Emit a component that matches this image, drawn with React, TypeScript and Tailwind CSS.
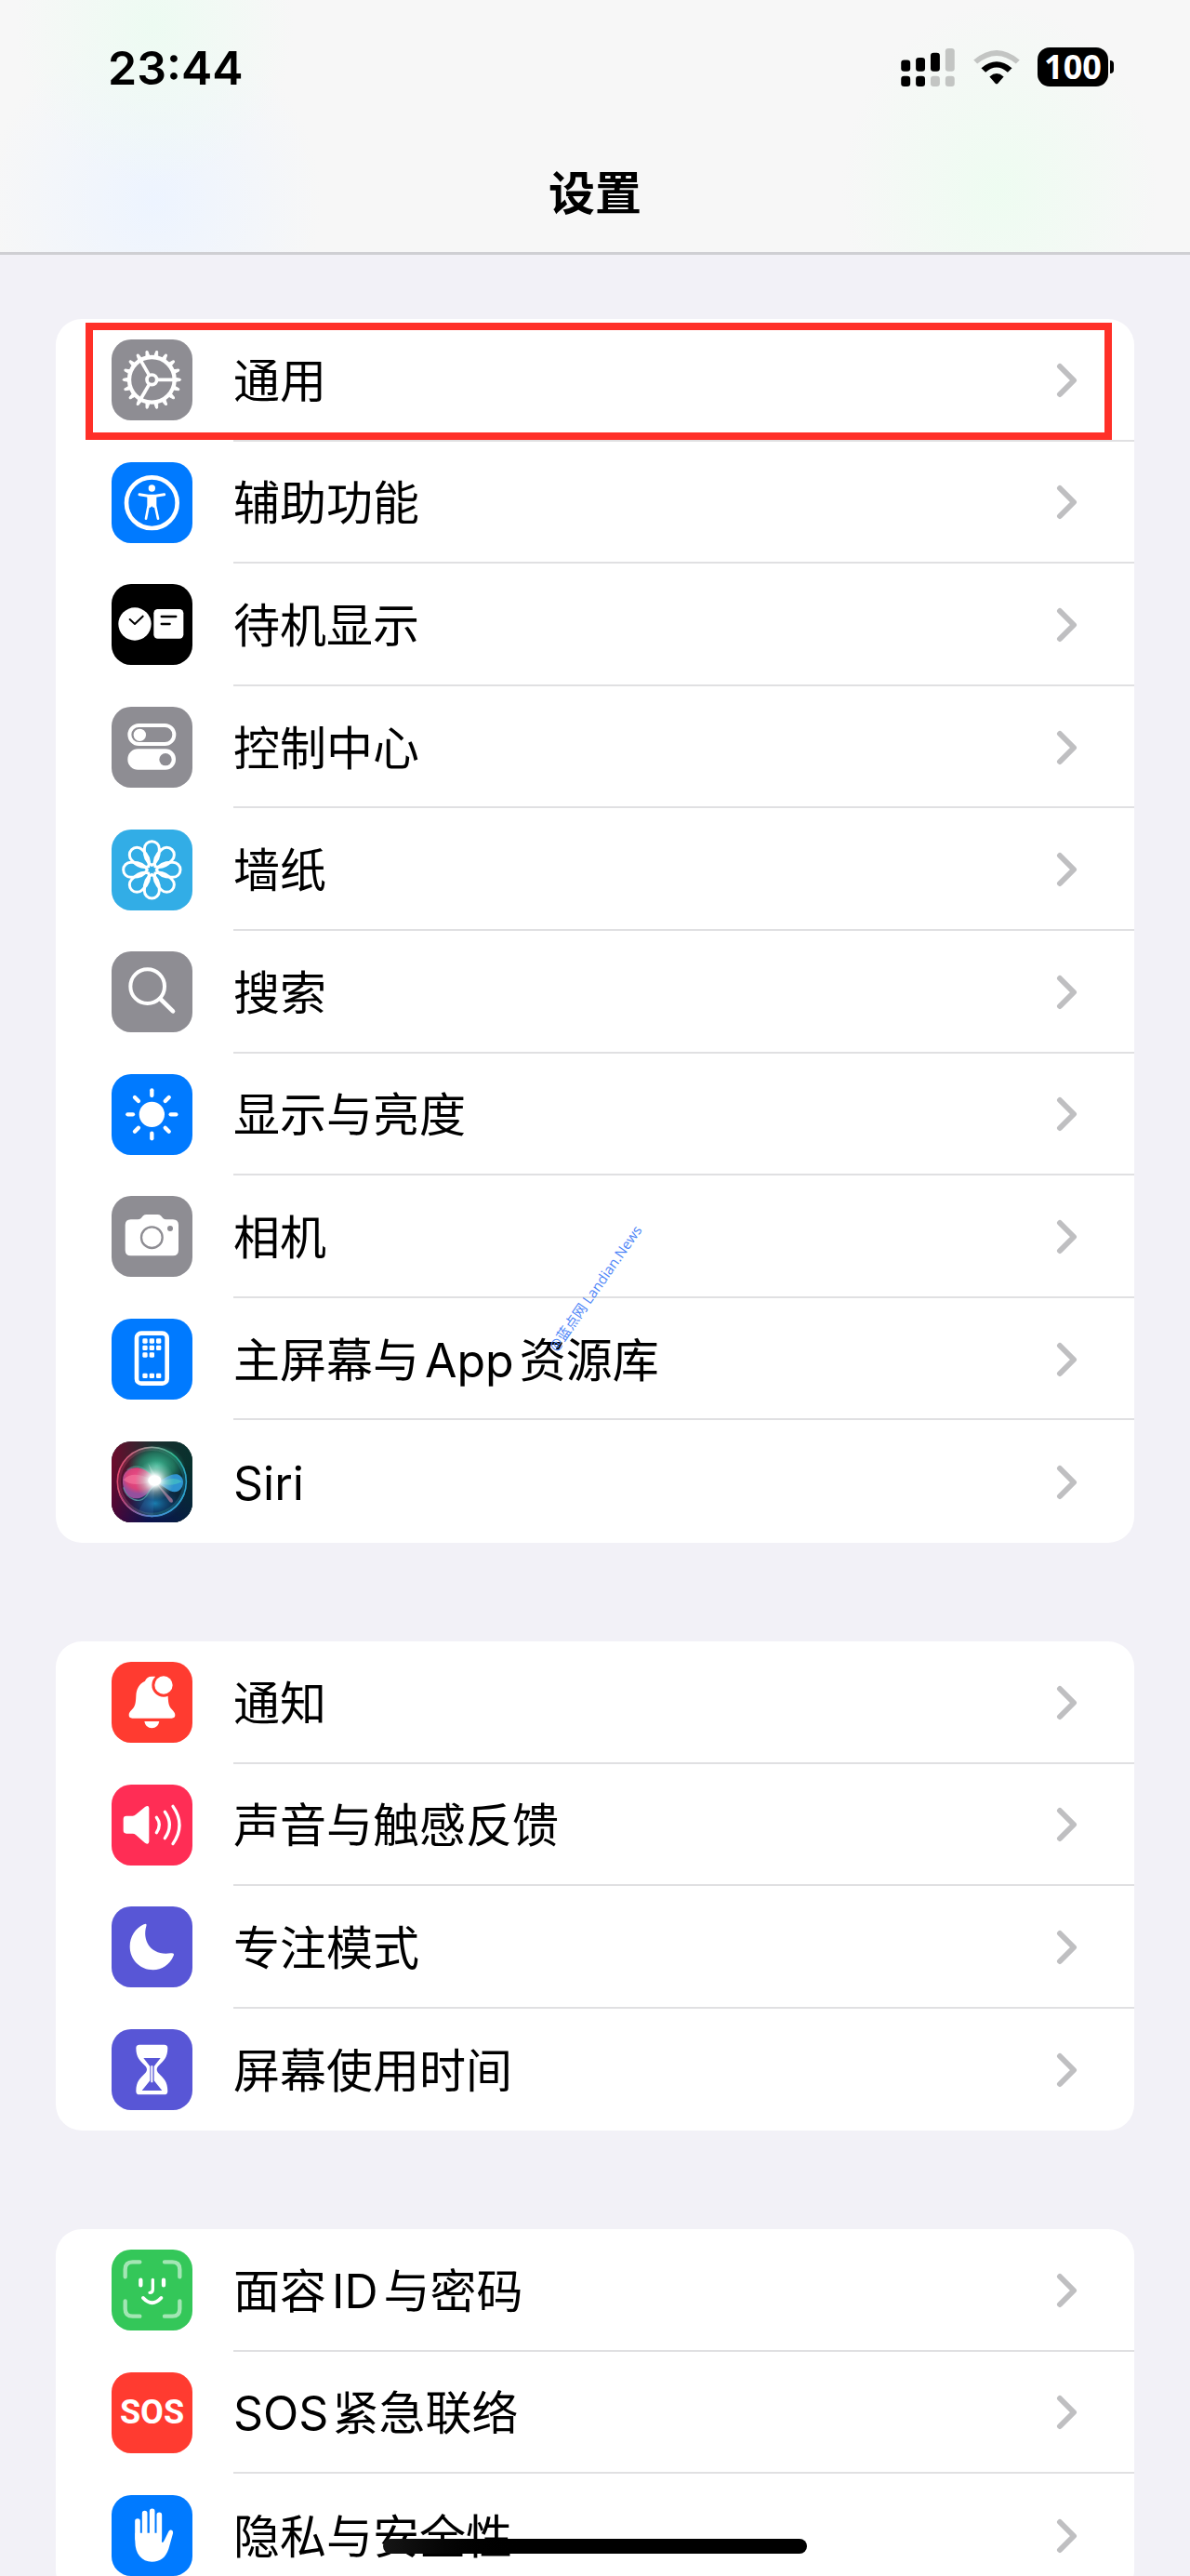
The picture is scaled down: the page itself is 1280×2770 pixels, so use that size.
import type { ReactNode } from "react";

const petalAngles = [0, 45, 90, 135, 180, 225, 270, 315];
const gearTeeth = Array.from({ length: 18 }, (_, i) => i * 20);

function GearGlyph() {
  return (
    <g stroke="#fff" fill="none">
      <circle cx="130" cy="130" r="73" strokeWidth="13" />
      <circle cx="130" cy="130" r="16" strokeWidth="11" />
      {gearTeeth.map((a) => (
        <path key={a} d="M206 124 L222 127 Q226 130 222 133 L206 136 Z" fill="#fff" strokeWidth="3" transform={`rotate(${a} 130 130)`} />
      ))}
      {[0, 120, 240].map((a) => (
        <path key={a} d="M150 130 H200" strokeWidth="11" transform={`rotate(${a} 130 130)`} />
      ))}
    </g>
  );
}

function AccessibilityGlyph() {
  return (
    <g stroke="#fff" fill="none" strokeLinecap="round" strokeLinejoin="round">
      <circle cx="130" cy="131" r="82" strokeWidth="14" />
      <circle cx="130" cy="84" r="11" fill="#fff" stroke="none" />
      <path d="M90 104 L118 109 H142 L170 104" strokeWidth="9" />
      <path d="M119 110 H141 V140 L150 182 M119 110 V140 L111 182" strokeWidth="8" />
      <path d="M119 108 H141 L142 146 H134 L130 142 L126 146 H118 Z" fill="#fff" stroke="none" />
    </g>
  );
}

function StandbyGlyph() {
  return (
    <g fill="none" strokeLinecap="round" strokeLinejoin="round">
      <circle cx="75" cy="129" r="53" fill="#fff" />
      <path d="M59 114 L75 129 L101 104" stroke="#000" strokeWidth="6" />
      <rect x="136" y="81" width="96" height="95" rx="13" fill="#fff" />
      <path d="M161 105 H208 M161 129 H188" stroke="#000" strokeWidth="7" />
    </g>
  );
}

function TogglesGlyph() {
  return (
    <g>
      <rect x="58" y="60" width="144" height="60" rx="30" fill="none" stroke="#fff" strokeWidth="12" />
      <circle cx="91" cy="91" r="20" fill="#fff" />
      <rect x="52" y="136" width="155" height="67" rx="33" fill="#fff" />
      <circle cx="174" cy="170" r="20" fill="#8e8d93" />
    </g>
  );
}

function FlowerGlyph() {
  return (
    <g fill="none" stroke="#fff" strokeWidth="9">
      {petalAngles.map((a) => (
        <path
          key={a}
          d="M130 115 C112 106 105 84 106 62 A24 24 0 0 1 154 62 C155 84 148 106 130 115 Z"
          transform={`rotate(${a} 130 130)`}
        />
      ))}
    </g>
  );
}

function SearchGlyph() {
  return (
    <g fill="none" stroke="#fff" strokeLinecap="round">
      <circle cx="116" cy="113" r="55" strokeWidth="12" />
      <path d="M157 153 L198 193" strokeWidth="14" />
    </g>
  );
}

function SunGlyph() {
  return (
    <g stroke="#fff" strokeWidth="13" strokeLinecap="round">
      <circle cx="130" cy="130" r="41" fill="#fff" stroke="none" />
      {petalAngles.map((a) => (
        <path key={a} d="M130 52 V69" transform={`rotate(${a} 130 130)`} />
      ))}
    </g>
  );
}

function CameraGlyph() {
  return (
    <g>
      <path
        fill="#fff"
        d="M62 76 H84 Q91 76 95 72 L102 64 Q106 60 113 60 H148 Q155 60 159 64 L166 72 Q170 76 177 76 H198 Q216 76 216 94 V175 Q216 193 198 193 H62 Q44 193 44 175 V94 Q44 76 62 76 Z"
      />
      <circle cx="130" cy="134" r="34" fill="none" stroke="#8e8d93" strokeWidth="7" />
      <circle cx="189" cy="105" r="9" fill="#8e8d93" />
    </g>
  );
}

function PhoneGlyph() {
  const dots = [
    [72, 108], [72, 130], [72, 152],
    [94, 108], [94, 130], [94, 152],
    [117, 108], [117, 130],
    [184, 108], [184, 130], [184, 152],
  ];
  return (
    <g>
      <rect x="81" y="47" width="98" height="162" rx="15" fill="none" stroke="#fff" strokeWidth="14" />
      {dots.map(([y, x]) => (
        <rect key={`${x}-${y}`} x={x - 8} y={y - 8} width="16" height="16" rx="4" fill="#fff" />
      ))}
    </g>
  );
}

function SiriGlyph() {
  return (
    <g>
      <defs>
        <linearGradient id="siri-top" x1="0" y1="0" x2="1" y2="0">
          <stop offset="0" stopColor="#6d0a2c" />
          <stop offset="0.5" stopColor="#1d2f30" />
          <stop offset="1" stopColor="#07312d" />
        </linearGradient>
        <linearGradient id="siri-bottom" x1="0" y1="0" x2="1" y2="0">
          <stop offset="0" stopColor="#4a0538" />
          <stop offset="0.45" stopColor="#0b1250" />
          <stop offset="1" stopColor="#06213f" />
        </linearGradient>
        <linearGradient id="siri-fade" x1="0" y1="0" x2="0" y2="1">
          <stop offset="0.3" stopColor="#fff" stopOpacity="0" />
          <stop offset="1" stopColor="#fff" />
        </linearGradient>
        <mask id="siri-mask"><rect width="261" height="261" fill="url(#siri-fade)" /></mask>
        <linearGradient id="siri-ring" x1="0" y1="0.4" x2="1" y2="0.6">
          <stop offset="0" stopColor="#e0466e" />
          <stop offset="0.4" stopColor="#8d9d98" />
          <stop offset="0.75" stopColor="#2bb78e" />
          <stop offset="1" stopColor="#2d9fd0" />
        </linearGradient>
        <linearGradient id="siri-ring-low" x1="0" y1="0" x2="1" y2="0">
          <stop offset="0" stopColor="#c23a70" />
          <stop offset="0.5" stopColor="#4a86d8" />
          <stop offset="1" stopColor="#2ba6cf" />
        </linearGradient>
        <radialGradient id="siri-green"><stop offset="0" stopColor="#3fbd98" /><stop offset="0.6" stopColor="#248468" stopOpacity="0.8" /><stop offset="1" stopColor="#1a7a61" stopOpacity="0" /></radialGradient>
        <radialGradient id="siri-deep"><stop offset="0" stopColor="#1a7fb0" /><stop offset="1" stopColor="#0c3b68" stopOpacity="0" /></radialGradient>
        <radialGradient id="siri-pink" cx="0.45" cy="0.35"><stop offset="0" stopColor="#f4508a" /><stop offset="0.7" stopColor="#d8437a" /><stop offset="1" stopColor="#94509e" /></radialGradient>
        <radialGradient id="siri-glow">
          <stop offset="0" stopColor="#fff" />
          <stop offset="0.3" stopColor="#f4fffd" stopOpacity="0.9" />
          <stop offset="0.6" stopColor="#c4e4de" stopOpacity="0.45" />
          <stop offset="1" stopColor="#7fc0b0" stopOpacity="0" />
        </radialGradient>
      </defs>
      <rect width="261" height="261" fill="url(#siri-top)" />
      <rect width="261" height="261" fill="url(#siri-bottom)" mask="url(#siri-mask)" />
      <ellipse cx="146" cy="80" rx="92" ry="70" fill="url(#siri-green)" />
      <ellipse cx="140" cy="200" rx="86" ry="56" fill="url(#siri-deep)" />
      <path d="M140 130 L88 222 Q110 236 134 238 Z" fill="#3b6fb5" opacity="0.25" />
      <path d="M36 122 C38 90 72 76 104 90 C126 100 138 120 160 132 C124 144 120 180 84 184 C52 186 34 156 36 122 Z" fill="url(#siri-pink)" />
      <path d="M38 124 C66 92 110 112 146 132 C102 134 66 148 38 124 Z" fill="#f77fa4" opacity="0.55" />
      <path d="M38 148 C50 190 92 202 112 176 C122 160 130 142 150 134" fill="none" stroke="#5fb0b6" strokeWidth="4" opacity="0.7" />
      <path d="M50 92 C80 68 112 84 146 128" fill="none" stroke="#5fb0a6" strokeWidth="4" opacity="0.5" />
      <path d="M146 132 C174 118 192 102 212 106 C236 112 238 146 216 160 C192 172 172 146 146 132 Z" fill="#2e93d0" />
      <path d="M150 132 C178 124 202 110 228 130 C206 140 182 146 150 132 Z" fill="#45c4c2" opacity="0.65" />
      <path d="M140 130 L188 196 Q202 200 196 186 Z" fill="#b07c9c" opacity="0.75" />
      <path d="M136 128 L118 70 L150 122 Z" fill="#bfe0d6" opacity="0.4" />
      <circle cx="139" cy="126" r="64" fill="url(#siri-glow)" />
      <ellipse cx="139" cy="126" rx="21" ry="17" fill="#fff" />
      <circle cx="130" cy="130" r="111" fill="none" stroke="url(#siri-ring)" strokeWidth="5" />
      <path d="M26 169 A111 111 0 0 0 234 169" fill="none" stroke="url(#siri-ring-low)" strokeWidth="5" />
      <circle cx="130" cy="130" r="104" fill="none" stroke="url(#siri-ring)" strokeWidth="8" opacity="0.25" />
    </g>
  );
}

function BellGlyph() {
  return (
    <g>
      <path
        fill="#fff"
        d="M130 47 C118 47 111 53 108 62 C88 71 80 88 79 110 C78 134 76 143 66 154 C58 162 56 166 56 172 Q56 182 67 182 H194 Q205 182 205 172 C205 166 202 162 195 154 C185 143 183 134 182 110 L170 60 L140 47 Z"
      />
      <path fill="#fff" d="M106 192 H154 Q150 214 130 214 Q110 214 106 192 Z" />
      <circle cx="168" cy="75" r="38" fill="#ff3b30" />
      <circle cx="168" cy="75" r="29" fill="#fff" />
    </g>
  );
}

function SpeakerGlyph() {
  return (
    <g>
      <path fill="#fff" d="M48 101 H68 Q74 101 78 97 L108 72 Q120 64 121 76 V184 Q120 196 108 188 L78 162 Q74 158 68 158 H48 Q38 158 38 148 V111 Q38 101 48 101 Z" />
      <path
        d="M145 106 Q163 130 145 155 M172 88 Q202 130 172 173 M198 70 Q240 130 198 191"
        fill="none"
        stroke="#fff"
        strokeWidth="10"
        strokeLinecap="round"
      />
    </g>
  );
}

function MoonGlyph() {
  return (
    <path
      fill="#fff"
      d="M104 58 C112 54 114 58 112 64 C98 112 128 160 190 151 C200 149 203 153 200 159 C188 188 162 205 134 205 C92 205 59 172 59 130 C59 98 77 70 104 58 Z"
    />
  );
}

function HourglassGlyph() {
  return (
    <g>
      <path
        fill="#fff"
        d="M90 50 H170 Q181 50 181 61 C181 92 168 102 150 120 Q142 130 150 140 C168 158 181 168 181 200 Q181 211 170 211 H90 Q79 211 79 200 C79 168 92 158 110 140 Q118 130 110 120 C92 102 79 92 79 61 Q79 50 90 50 Z"
      />
      <path fill="#5856d6" d="M103 93 H158 L137 120 V166 L163 198 H98 L124 166 V120 Z" />
      <path d="M130 118 V172" stroke="#fff" strokeWidth="6" />
    </g>
  );
}

function FaceGlyph() {
  return (
    <g fill="none" stroke="#fff" strokeLinecap="round" strokeLinejoin="round">
      <path
        opacity="0.55"
        strokeWidth="13"
        d="M44 88 V64 Q44 40 68 40 H91 M171 40 H196 Q220 40 220 64 V88 M220 166 V191 Q220 215 196 215 H171 M91 215 H68 Q44 215 44 191 V166"
      />
      <path strokeWidth="13" d="M94 98 V115 M168 98 V115" />
      <path strokeWidth="10" d="M133 97 V128 Q133 139 123 139" />
      <path strokeWidth="12" d="M102 156 Q131 187 160 156" />
    </g>
  );
}

function HandGlyph() {
  return (
    <g stroke="#fff" strokeWidth="17" strokeLinecap="round">
      <path d="M84 84 V140 M107 59 V140 M131 52 V140 M154 64 V140" />
      <path
        stroke="none"
        fill="#fff"
        d="M76 122 H162 V152 C166 154 168 150 170 146 L184 118 C188 109 201 112 198 124 L184 174 C174 202 158 215 130 215 C98 215 76 190 76 150 Z"
      />
    </g>
  );
}

type Item = { label: ReactNode; tile: string; glyph?: ReactNode; text?: string; marked?: boolean };

function Latin({ children, first = false }: { children: string; first?: boolean }) {
  return <span className={first ? "mr-1" : "mx-1.5"}>{children}</span>;
}

const groups: { size: string; items: Item[] }[] = [
  {
    size: "min-h-[1316px]",
    items: [
      { label: "通用", tile: "bg-[#8e8d93]", glyph: <GearGlyph />, marked: true },
      { label: "辅助功能", tile: "bg-[#007aff]", glyph: <AccessibilityGlyph /> },
      { label: "待机显示", tile: "bg-black", glyph: <StandbyGlyph /> },
      { label: "控制中心", tile: "bg-[#8e8d93]", glyph: <TogglesGlyph /> },
      { label: "墙纸", tile: "bg-[#32ade6]", glyph: <FlowerGlyph /> },
      { label: "搜索", tile: "bg-[#8e8d93]", glyph: <SearchGlyph /> },
      { label: "显示与亮度", tile: "bg-[#007aff]", glyph: <SunGlyph /> },
      { label: "相机", tile: "bg-[#8e8d93]", glyph: <CameraGlyph /> },
      { label: <>主屏幕与<Latin>App</Latin>资源库</>, tile: "bg-[#007aff]", glyph: <PhoneGlyph /> },
      { label: "Siri", tile: "bg-[#1d2f30]", glyph: <SiriGlyph /> },
    ],
  },
  {
    size: "min-h-[526px]",
    items: [
      { label: "通知", tile: "bg-[#ff3b30]", glyph: <BellGlyph /> },
      { label: "声音与触感反馈", tile: "bg-[#ff2d55]", glyph: <SpeakerGlyph /> },
      { label: "专注模式", tile: "bg-[#5856d6]", glyph: <MoonGlyph /> },
      { label: "屏幕使用时间", tile: "bg-[#5856d6]", glyph: <HourglassGlyph /> },
    ],
  },
  {
    size: "min-h-[395px]",
    items: [
      { label: <>面容<Latin>ID</Latin>与密码</>, tile: "bg-[#34c759]", glyph: <FaceGlyph /> },
      { label: <><Latin first>SOS</Latin>紧急联络</>, tile: "bg-[#ff3b30]", text: "SOS" },
      { label: "隐私与安全性", tile: "bg-[#007aff]", glyph: <HandGlyph /> },
    ],
  },
];

function Row({ item, last }: { item: Item; last: boolean }) {
  return (
    <li className="relative flex">
      <a href="#" className="flex flex-1 items-center gap-11 pl-[60px]">
        <span className={`flex size-[87px] shrink-0 items-center justify-center overflow-hidden rounded-[21px] ${item.tile}`}>
          {item.glyph ? (
            <svg viewBox="0 0 261 261" className="size-full" aria-hidden="true">{item.glyph}</svg>
          ) : (
            <span className="font-[Roboto,sans-serif] text-[36px] leading-none font-bold text-white">{item.text}</span>
          )}
        </span>
        <span className={`flex flex-1 items-center justify-between self-stretch pt-0.5 pr-[60px] ${last ? "" : "border-b-2 border-[#e0e0e2]"}`}>
          <span className="pt-0.5 text-[50px] leading-[60px]">{item.label}</span>
          <svg viewBox="0 0 24 38" className="h-[38px] w-6" aria-hidden="true">
            <path d="M4 4 L19 19 L4 34" fill="none" stroke="#bfbfc1" strokeWidth="6" strokeLinecap="round" strokeLinejoin="round" />
          </svg>
        </span>
      </a>
      {item.marked && <span className="pointer-events-none absolute top-1 right-6 bottom-0.5 left-8 border-8 border-[#ff3028]" />}
    </li>
  );
}

function Signal() {
  return (
    <svg viewBox="0 0 177 124" className="h-[41px] w-[59px]" role="img" aria-label="信号">
      <g fill="#000">
        <rect x="0" y="38" width="30" height="37" rx="10" />
        <rect x="48" y="30" width="30" height="45" rx="10" />
        <rect x="96" y="14" width="30" height="61" rx="10" />
        <rect x="0" y="90" width="30" height="34" rx="10" />
        <rect x="48" y="90" width="30" height="34" rx="10" />
      </g>
      <g fill="#c3c5c3">
        <rect x="144" y="0" width="30" height="75" rx="10" />
        <rect x="96" y="90" width="30" height="34" rx="10" />
        <rect x="144" y="90" width="30" height="34" rx="10" />
      </g>
    </svg>
  );
}

function Wifi() {
  return (
    <svg viewBox="0 0 150 112" className="h-[37px] w-[50px]" role="img" aria-label="无线网络">
      <path d="M0 32 Q75 -32 150 32 L138 44 Q75 -8 12 44 Z" fill="#c3c5c3" />
      <path d="M25 58 Q75 16 125 58 L111 72 Q75 40 39 72 Z" fill="#000" />
      <path d="M52 86 Q75 66 98 86 L79 108 Q75 112 71 108 Z" fill="#000" />
    </svg>
  );
}

export default function App() {
  return (
    <div className="relative h-screen overflow-hidden bg-[#f2f1f7] font-[Inter,'Noto_Sans_CJK_SC',sans-serif] text-black">
      <header className="border-b-3 border-[#cfcfd3] bg-[#f7f7f7] bg-[radial-gradient(ellipse_150px_170px_at_13%_10%,#edfbf2,transparent),radial-gradient(ellipse_180px_190px_at_13%_80%,#edf4ff,transparent),radial-gradient(ellipse_170px_200px_at_84%_75%,#eefcf1,transparent)]">
        <div className="flex h-36 items-center justify-between pr-[82px] pl-[116px]">
          <time className="pt-0.5 text-[50px] leading-[60px] font-semibold">23:44</time>
          <div className="flex items-center gap-[19px]">
            <Signal />
            <Wifi />
            <div className="flex items-center gap-0.5">
              <span className="flex h-[42px] w-[76px] items-center justify-center rounded-[13px] bg-black font-['Noto_Sans',sans-serif] text-[36px] leading-none font-bold text-white">
                100
              </span>
              <span className="h-3.5 w-1 rounded-r-full bg-black" />
            </div>
          </div>
        </div>
        <h1 className="flex h-[127px] items-center justify-center text-[50px] leading-[60px] font-semibold">设置</h1>
      </header>

      <main className="flex flex-col gap-[106px] px-[60px] pt-[69px]">
        {groups.map((group) => (
          <ul key={group.size} className={`grid shrink-0 auto-rows-fr rounded-[28px] bg-white ${group.size}`}>
            {group.items.map((item, i) => (
              <Row key={i} item={item} last={i === group.items.length - 1} />
            ))}
          </ul>
        ))}
      </main>

      <span className="pointer-events-none absolute top-[1374px] left-1/2 -translate-x-1/2 -rotate-55 font-['Open_Sans','Noto_Sans_CJK_SC',sans-serif] text-[15px] leading-[22px] whitespace-nowrap text-[#4f86f7]">
        @蓝点网 Landian.News
      </span>
      <span className="absolute bottom-6 left-1/2 h-4 w-[456px] -translate-x-1/2 rounded-full bg-linear-to-r from-[#161616] to-black to-35%" />
    </div>
  );
}
